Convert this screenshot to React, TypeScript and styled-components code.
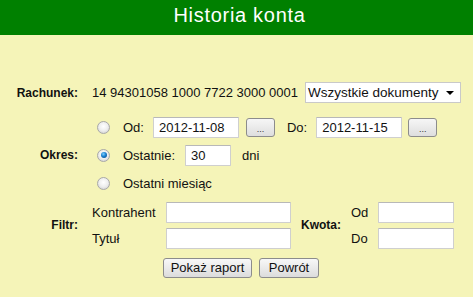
import styled, { createGlobalStyle } from "styled-components";

const GlobalStyle = createGlobalStyle`
  html, body { margin: 0; padding: 0; }
  body {
    background-color: #f5f4b8;
    font-family: "Liberation Sans", Arial, sans-serif;
    font-size: 13px;
    color: #111;
  }
`;

const Page = styled.div`
  width: 473px;
  height: 297px;
  overflow: hidden;
  background-color: #f5f4b8;
`;

const Header = styled.h1`
  margin: 0;
  height: 35px;
  line-height: 31px;
  background-color: #008000;
  color: #fff;
  font-size: 20px;
  font-weight: 400;
  letter-spacing: 0.7px;
  text-align: center;
  padding-left: 6px;
`;

const Form = styled.div`
  display: grid;
  grid-template-columns: 78px 1fr;
  column-gap: 14px;
  padding-top: 47px;
`;

const Label = styled.div<{ $mt?: number }>`
  align-self: center;
  text-align: right;
  font-weight: 700;
  font-size: 12px;
  margin-top: ${(p) => p.$mt || 0}px;
`;

const Cell = styled.div<{ $mt?: number }>`
  margin-top: ${(p) => p.$mt || 0}px;
`;

const AccountRow = styled.div`
  display: flex;
  align-items: center;
  height: 21px;
  gap: 7px;
`;

const Select = styled.div`
  display: flex;
  align-items: center;
  justify-content: space-between;
  box-sizing: border-box;
  width: 156px;
  height: 21px;
  padding: 0 6px 0 2px;
  background: #fff;
  border: 1px solid #c9c9c9;
  font-size: 13.5px;
`;

const Arrow = styled.span`
  width: 0;
  height: 0;
  border-left: 4px solid transparent;
  border-right: 4px solid transparent;
  border-top: 4px solid #000;
`;

const PeriodGrid = styled.div`
  display: grid;
  grid-template-columns: 31px auto;
  grid-auto-rows: 28px;
`;

const Line = styled.div`
  display: flex;
  align-items: center;
`;

const Radio = styled.span<{ $checked?: boolean }>`
  align-self: center;
  justify-self: start;
  margin-left: 5px;
  box-sizing: border-box;
  width: 13px;
  height: 13px;
  border-radius: 50%;
  border: 1px solid #a8a8a8;
  background: radial-gradient(circle at 50% 40%, #ffffff 0%, #eeeeee 50%, #c8c8c8 100%);
  display: flex;
  align-items: center;
  justify-content: center;
  &::after {
    content: "";
    display: ${(p) => (p.$checked ? "block" : "none")};
    width: 6px;
    height: 6px;
    border-radius: 50%;
    background: radial-gradient(circle at 40% 35%, #7fd0ff 0%, #1a7fd0 45%, #0a3f7a 100%);
  }
`;

const Input = styled.div<{ $w: number }>`
  box-sizing: border-box;
  width: ${(p) => p.$w}px;
  height: 21px;
  padding: 0 5px;
  line-height: 19px;
  background: #fff;
  border: 1px solid #cfcfcf;
  border-top-color: #b8b8b8;
  border-radius: 1px;
  font-size: 13px;
`;

const Text = styled.span<{ $ml?: number; $mr?: number }>`
  margin-left: ${(p) => p.$ml || 0}px;
  margin-right: ${(p) => p.$mr || 0}px;
`;

const DotsButton = styled.div<{ $ml?: number }>`
  box-sizing: border-box;
  width: 29px;
  height: 19px;
  margin-left: ${(p) => p.$ml || 0}px;
  border: 1px solid #8c8c8c;
  border-radius: 3px;
  background: linear-gradient(#f6f6f6, #dedede);
  font-size: 9px;
  text-align: center;
  line-height: 20px;
  color: #333;
`;

const FilterRow = styled.div`
  display: flex;
  align-items: center;
`;

const FieldGrid = styled.div<{ $label: number }>`
  display: grid;
  grid-template-columns: ${(p) => p.$label}px auto;
  grid-auto-rows: 26px;
  align-items: center;
`;

const Kwota = styled.div`
  font-weight: 700;
  font-size: 12px;
  margin: 0 10px;
`;

const Buttons = styled.div`
  display: flex;
  gap: 7px;
  padding-left: 71px;
  margin-top: 7px;
`;

const Button = styled.div<{ $w: number }>`
  box-sizing: border-box;
  width: ${(p) => p.$w}px;
  height: 20px;
  border: 1px solid #8c8c8c;
  border-radius: 3px;
  background: linear-gradient(#f8f8f8, #dcdcdc);
  text-align: center;
  line-height: 18px;
  font-size: 13px;
  color: #111;
`;

export default function App() {
  return (
    <Page>
      <GlobalStyle />
      <Header>Historia konta</Header>
      <Form>
        <Label>Rachunek:</Label>
        <AccountRow>
          <span>14 94301058 1000 7722 3000 0001</span>
          <Select>
            <span>Wszystkie dokumenty</span>
            <Arrow />
          </Select>
        </AccountRow>

        <Label $mt={10}>Okres:</Label>
        <Cell $mt={10}>
          <PeriodGrid>
            <Radio />
            <Line>
              <Text $mr={9}>Od:</Text>
              <Input $w={86}>2012-11-08</Input>
              <DotsButton $ml={7}>...</DotsButton>
              <Text $ml={12} $mr={9}>Do:</Text>
              <Input $w={86}>2012-11-15</Input>
              <DotsButton $ml={6}>...</DotsButton>
            </Line>
            <Radio $checked />
            <Line>
              <Text $mr={10}>Ostatnie:</Text>
              <Input $w={46}>30</Input>
              <Text $ml={11}>dni</Text>
            </Line>
            <Radio />
            <Line>
              <Text>Ostatni miesiąc</Text>
            </Line>
          </PeriodGrid>
        </Cell>

        <Label $mt={2}>Filtr:</Label>
        <Cell $mt={2}>
          <FilterRow>
            <FieldGrid $label={74}>
              <span>Kontrahent</span>
              <Input $w={125} />
              <span>Tytuł</span>
              <Input $w={125} />
            </FieldGrid>
            <Kwota>Kwota:</Kwota>
            <FieldGrid $label={27}>
              <span>Od</span>
              <Input $w={76} />
              <span>Do</span>
              <Input $w={76} />
            </FieldGrid>
          </FilterRow>
        </Cell>

        <span />
        <Buttons>
          <Button $w={89}>Pokaż raport</Button>
          <Button $w={60}>Powrót</Button>
        </Buttons>
      </Form>
    </Page>
  );
}
